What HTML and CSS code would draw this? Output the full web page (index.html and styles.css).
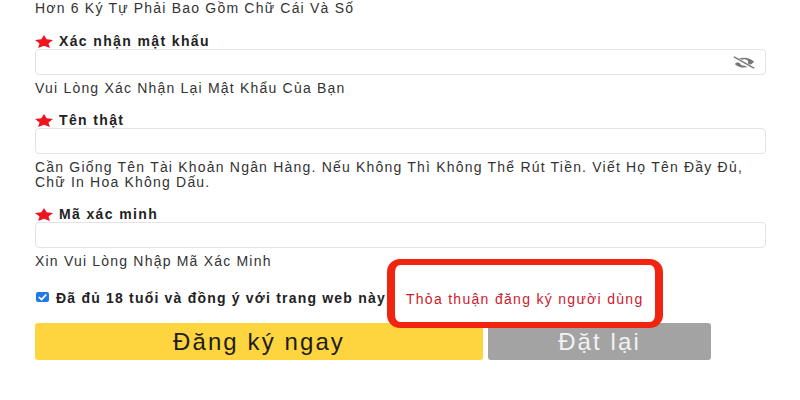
FILE: index.html
```html
<!DOCTYPE html>
<html lang="vi">
<head>
    <meta charset="UTF-8">
    <meta name="viewport" content="width=device-width, initial-scale=1.0">
    <link rel="stylesheet" href="styles.css">
</head>
<body>
    <form class="register-form">
        <p class="hint hint-top">Hơn 6 Ký Tự Phải Bao Gồm Chữ Cái Và Số</p>

        <div class="field field-password">
            <label class="field-label">
                <svg class="star" viewBox="0 0 24 20" preserveAspectRatio="none"><path d="M12 0l3.500 6.500 8.500 1-6 5.500 1.800 7-7.800-3.600-7.800 3.600 1.800-7-6-5.500 8.500-1z"/></svg>
                Xác nhận mật khẩu
            </label>
            <div class="input-box">
                <svg class="eye-off" viewBox="0 0 26 18" preserveAspectRatio="none">
                    <path class="eye-fill" d="M2 8c3-3.500 7-5.500 11-5.500s8 2 11 5.500c-1 1.500-2.400 2.900-4 4l-3-2c.4-.8.600-1.600.4-2.500-.5-2-2.400-3.200-4.400-3-.8.100-1.500.4-2.100.8L8 3.600C5.800 4.500 3.800 6 2 8zM3 11c3 3.500 6.500 5 10 5 1.300 0 2.600-.2 3.800-.6l-2.800-2c-2.200.2-4.700-.8-5.500-3.400L6 8.500C5 9.200 4 10 3 11z"/>
                    <path class="eye-line" d="M2 1l22 16"/>
                </svg>
            </div>
            <p class="hint">Vui Lòng Xác Nhận Lại Mật Khẩu Của Bạn</p>
        </div>

        <div class="field field-name">
            <label class="field-label">
                <svg class="star" viewBox="0 0 24 20" preserveAspectRatio="none"><path d="M12 0l3.500 6.500 8.500 1-6 5.500 1.800 7-7.800-3.600-7.800 3.600 1.800-7-6-5.500 8.500-1z"/></svg>
                Tên thật
            </label>
            <div class="input-box"></div>
            <p class="hint">Cần Giống Tên Tài Khoản Ngân Hàng. Nếu Không Thì Không Thể Rút Tiền. Viết Họ Tên Đầy Đủ,<br>Chữ In Hoa Không Dấu.</p>
        </div>

        <div class="field field-code">
            <label class="field-label">
                <svg class="star" viewBox="0 0 24 20" preserveAspectRatio="none"><path d="M12 0l3.500 6.500 8.500 1-6 5.500 1.800 7-7.800-3.600-7.800 3.600 1.800-7-6-5.500 8.500-1z"/></svg>
                Mã xác minh
            </label>
            <div class="input-box"></div>
            <p class="hint">Xin Vui Lòng Nhập Mã Xác Minh</p>
        </div>

        <div class="agree-row">
            <span class="check-box">
                <svg viewBox="0 0 14 12" preserveAspectRatio="none"><path d="M3 6l3 3 5-6"/></svg>
            </span>
            <span class="agree-text">Đã đủ 18 tuổi và đồng ý với trang web này</span>
            <a class="agree-link">Thỏa thuận đăng ký người dùng</a>
            <span class="highlight-box"></span>
        </div>

        <div class="button-row">
            <button type="button" class="btn btn-submit">Đăng ký ngay</button>
            <button type="button" class="btn btn-reset">Đặt lại</button>
        </div>
    </form>
</body>
</html>
```

FILE: styles.css
```css
html, body {
    margin: 0;
    padding: 0;
    height: 400px;
    overflow: hidden;
    background-color: #fff;
}

body {
    font-family: "Liberation Sans", Arial, sans-serif;
    color: #2b2b2b;
}

.register-form {
    width: 731px;
    margin-left: 35px;
}

.hint {
    margin: 0;
    font-size: 14px;
    line-height: 15px;
    letter-spacing: 1.2px;
    color: #333;
}

.hint-top {
    padding-top: 1px;
}

.field-password {
    margin-top: 17px;
}
.field-name {
    margin-top: 16px;
}
.field-code {
    margin-top: 16px;
}

.field .hint {
    margin-top: 6px;
}

.field-label {
    display: flex;
    align-items: center;
    height: 16px;
    gap: 6px;
    font-size: 14px;
    font-weight: bold;
    letter-spacing: 1.37px;
    color: #222;
}

.star {
    width: 18px;
    height: 13px;
    fill: #f0141e;
}

.input-box {
    height: 24px;
    border: 1px solid #e3e3e3;
    border-radius: 4px;
    display: flex;
    justify-content: flex-end;
    align-items: center;
    padding-right: 9px;
}

.eye-off {
    width: 24px;
    height: 13px;
}
.eye-fill {
    fill: #777;
}
.eye-line {
    stroke: #777;
    stroke-width: 2;
    fill: none;
}

.agree-row {
    position: relative;
    display: flex;
    align-items: center;
    height: 20px;
    margin-top: 19px;
}

.check-box {
    width: 13px;
    height: 10px;
    border-radius: 2px;
    background-color: #1f7ae8;
    display: flex;
    margin: -3px 7px 0 1px;
}
.check-box svg {
    width: 13px;
    height: 10px;
    fill: none;
    stroke: #fff;
    stroke-width: 2;
}

.agree-text {
    font-size: 14px;
    font-weight: bold;
    letter-spacing: 1.2px;
    color: #222;
    white-space: nowrap;
}

.agree-link {
    margin-left: 20px;
    margin-top: 2px;
    font-size: 14px;
    letter-spacing: 1.3px;
    color: #cc1a2c;
    white-space: nowrap;
}

/* red annotation drawn over the screenshot */
.highlight-box {
    position: absolute;
    left: 352px;
    top: -29px;
    width: 276px;
    height: 69px;
    box-sizing: border-box;
    border-style: solid;
    border-color: #f0240f;
    border-width: 6px 8px;
    border-radius: 13px;
}

.button-row {
    display: flex;
    gap: 5px;
    margin-top: 15px;
}

.btn {
    height: 37px;
    border: none;
    border-radius: 3px;
    font-family: inherit;
    font-size: 24px;
    letter-spacing: 2.1px;
    padding: 0;
}

.btn-submit {
    width: 448px;
    background-color: #ffd53f;
    color: #1d1d1d;
}

.btn-reset {
    width: 223px;
    background-color: #a3a3a3;
    color: #f2f2f2;
}
```
